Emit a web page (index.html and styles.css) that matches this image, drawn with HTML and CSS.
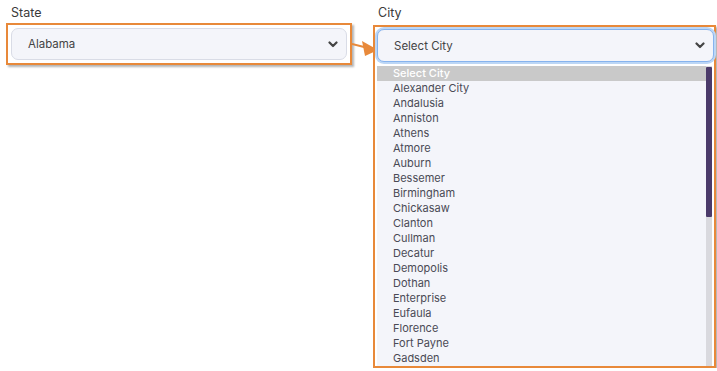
FILE: index.html
```html
<!DOCTYPE html>
<html lang="en">
<head>
  <meta charset="UTF-8" />
  <meta name="viewport" content="width=device-width, initial-scale=1.0"/>
  <title>State and City</title>
  <link rel="stylesheet" href="styles.css">
</head>
<body>
  <div class="form">
    <div class="field">
      <label class="lbl">State</label>
      <div class="mark">
        <div class="pick">
          <span>Alabama</span>
          <svg class="chev" width="10" height="7" viewBox="0 0 10 7"><path d="M1.5 1.5 L5 5 L8.5 1.5" fill="none" stroke="#444" stroke-width="2.2" stroke-linecap="round" stroke-linejoin="round"/></svg>
        </div>
      </div>
      <svg class="arrow" width="34" height="30" viewBox="0 0 34 30"><path d="M0 14 L16 18" stroke="#e8893a" stroke-width="2"/><path d="M10 11 L26 20 L13 26 Z" fill="#e8893a"/></svg>
    </div>

    <div class="field city">
      <label class="lbl">City</label>
      <div class="mark">
        <div class="pick focus">
          <span>Select City</span>
          <svg class="chev" width="10" height="7" viewBox="0 0 10 7"><path d="M1.5 1.5 L5 5 L8.5 1.5" fill="none" stroke="#444" stroke-width="2.2" stroke-linecap="round" stroke-linejoin="round"/></svg>
        </div>
        <div class="list">
          <ul class="opts">
            <li class="sel">Select City</li>
            <li>Alexander City</li>
            <li>Andalusia</li>
            <li>Anniston</li>
            <li>Athens</li>
            <li>Atmore</li>
            <li>Auburn</li>
            <li>Bessemer</li>
            <li>Birmingham</li>
            <li>Chickasaw</li>
            <li>Clanton</li>
            <li>Cullman</li>
            <li>Decatur</li>
            <li>Demopolis</li>
            <li>Dothan</li>
            <li>Enterprise</li>
            <li>Eufaula</li>
            <li>Florence</li>
            <li>Fort Payne</li>
            <li>Gadsden</li>
          </ul>
          <div class="track"><div class="thumb"></div></div>
        </div>
      </div>
    </div>
  </div>
</body>
</html>
```

FILE: styles.css
```css
body {
  margin: 0;
  padding: 0 1px 0 6px;
  background: #fff;
  font-family: Inter, "Noto Sans", sans-serif;
  color: #333;
}

.form {
  display: grid;
  grid-template-columns: 346px 343px;
  column-gap: 21px;
}

.field {
  position: relative;
}

.lbl {
  display: block;
  font-size: 12.5px;
  line-height: 15px;
  padding: 5px 0 0 5px;
  height: 18px;
  color: #3a3a3a;
}

.city .lbl {
  height: 20px;
}

.mark {
  border: 2px solid #e8893a;
  padding: 3px;
  box-shadow: 2px 2px 2px rgba(0,0,0,0.3);
  background: #fff;
}

.city .mark {
  padding: 2px 0 0 2px;
}

.pick {
  display: flex;
  align-items: center;
  justify-content: space-between;
  height: 30px;
  padding: 0 8px 0 16px;
  border: 1px solid #d9dce6;
  border-radius: 7px;
  background: #f4f5fa;
  font-size: 11.5px;
  color: #444;
}

.pick.focus {
  height: 31px;
  border-color: #86b3ee;
  box-shadow: 0 0 0 2px #bcd6f5;
}

.arrow {
  position: absolute;
  left: 346px;
  top: 30px;
}

.list {
  display: flex;
  margin-top: 4px;
  background: #f4f5fa;
  margin-right: 2px;
}

.opts {
  list-style: none;
  margin: 0;
  padding: 0;
  flex: 1;
}

.opts li {
  height: 15px;
  line-height: 15px;
  font-size: 11px;
  padding-left: 16px;
  color: #4a4a55;
}

.opts li.sel {
  background: #c9c9c9;
  color: #fff;
  font-weight: 500;
}

.track {
  width: 6px;
  background: #d9d9de;
}

.thumb {
  height: 150px;
  margin-top: 1px;
  background: #4b3a6a;
  border-radius: 1px;
}
```
